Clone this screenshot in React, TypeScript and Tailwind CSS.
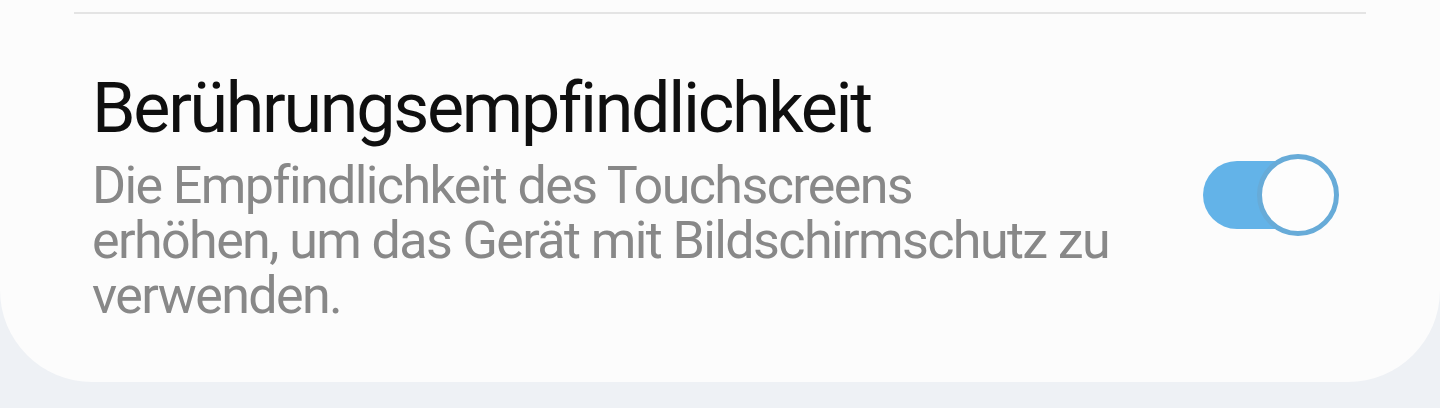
import React from 'react';

const Toggle: React.FC = () => (
  <div className="relative w-[136px] h-[82px] shrink-0">
    <div className="absolute left-0 top-[7px] w-[116px] h-[68px] rounded-full bg-[#63b3e8]" />
    <div className="absolute right-0 top-0 w-[82px] h-[82px] rounded-full bg-[#fdfdfd] border-[5px] border-[#67abd8]" />
  </div>
);

export default function App() {
  return (
    <div className="h-[408px] w-full bg-[#eef1f5]" style={{ fontFamily: 'Roboto, "Noto Sans", sans-serif' }}>
      <div className="h-[382px] bg-[#fcfcfc] rounded-b-[92px] px-[74px] pt-3">
        <div className="h-[2px] bg-[#e4e4e4]" />
        <div className="flex items-center pl-[18px] pr-[27px] pt-[52px]">
          <div className="flex-1 min-w-0">
            <h1 className="text-[70px] leading-[84px] tracking-[-2.3px] text-[#0f0f0f] font-normal">
              Berührungsempfindlichkeit
            </h1>
            <p className="mt-[8px] text-[52px] leading-[55px] tracking-[-1.6px] text-[#888888] max-w-[1060px]">
              Die Empfindlichkeit des Touchscreens
              <br />
              erhöhen, um das Gerät mit Bildschirmschutz zu verwenden.
            </p>
          </div>
          <Toggle />
        </div>
      </div>
    </div>
  );
}
